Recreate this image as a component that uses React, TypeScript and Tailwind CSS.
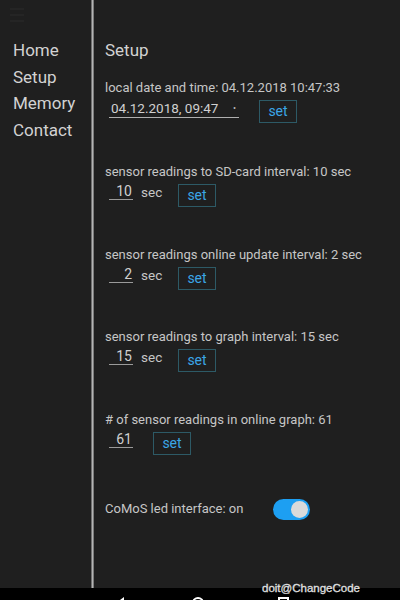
import React from "react";

const font = { fontFamily: "Roboto, 'Noto Sans', sans-serif" };

function SetButton() {
  return (
    <div className="h-[23px] w-[38px] border border-[#2d5a66] flex items-center justify-center text-[14px] leading-none text-[#3ba6e6] pb-[1px]">
      set
    </div>
  );
}

function NumInput({ value }: { value: string }) {
  return (
    <div className="ml-[4px] mt-[-1px] w-[24px] h-[17px] leading-[17px] border-b border-[#9a9a9a] text-right text-[14px] text-[#cfcfcf] pr-[1px]">
      {value}
    </div>
  );
}

function Section({ label, value, mt, sec = true }: { label: string; value: string; mt: string; sec?: boolean }) {
  return (
    <div className={mt}>
      <div className="h-[20px] leading-[20px] text-[13px] text-[#c6c6c6] whitespace-nowrap">{label}</div>
      <div className="mt-[2px] flex items-start">
        <NumInput value={value} />
        {sec ? (
          <span className="ml-[8px] w-[37px] h-[17px] leading-[16px] text-[13.5px] text-[#c6c6c6]">sec</span>
        ) : (
          <span className="w-[20px]" />
        )}
        <SetButton />
      </div>
    </div>
  );
}

export default function App() {
  return (
    <div className="w-[400px] h-[600px] bg-[#1f1f1f] relative overflow-hidden flex flex-col" style={font}>
      <div className="flex flex-1 min-h-0">
        {/* left nav */}
        <div className="w-[91px] relative">
          <div className="absolute left-[10px] top-[8px] flex flex-col gap-[4px]">
            <div className="w-[14px] h-[2px] bg-[#252525]" />
            <div className="w-[14px] h-[2px] bg-[#252525]" />
            <div className="w-[14px] h-[2px] bg-[#252525]" />
          </div>
          <div className="pt-[37px] pl-[13px] text-[17px] leading-[26.5px] text-[#d2d2d2]">
            <div>Home</div>
            <div>Setup</div>
            <div>Memory</div>
            <div>Contact</div>
          </div>
        </div>
        {/* divider */}
        <div className="w-[3px] flex">
          <div className="w-[1px] bg-[#6e6e6e]" />
          <div className="w-[1px] bg-[#b4b4b4]" />
          <div className="w-[1px] bg-[#7a7a7a]" />
        </div>
        {/* right content */}
        <div className="flex-1 pl-[11px] pt-[37px]">
          <div className="h-[26px] leading-[26px] text-[17px] text-[#d2d2d2]">Setup</div>
          <div className="mt-[15px] h-[20px] leading-[20px] text-[13px] text-[#c6c6c6] whitespace-nowrap">
            local date and time: 04.12.2018 10:47:33
          </div>
          <div className="mt-[2px] flex items-start">
            <div className="ml-[4px] mt-[-1px] w-[130px] h-[19px] leading-[18px] border-b border-[#b0b0b0] flex items-center text-[13.5px] text-[#d0d0d0] pl-[2px]">
              <span>04.12.2018, 09:47</span>
              <span className="ml-auto mr-[3px] text-[9px] text-[#bbbbbb]">•</span>
            </div>
            <div className="ml-[20px]">
              <SetButton />
            </div>
          </div>

          <Section label="sensor readings to SD-card interval: 10 sec" value="10" mt="mt-[39px]" />
          <Section label="sensor readings online update interval: 2 sec" value="2" mt="mt-[38px]" />
          <Section label="sensor readings to graph interval: 15 sec" value="15" mt="mt-[37px]" />
          <Section label="# of sensor readings in online graph: 61" value="61" mt="mt-[38px]" sec={false} />

          <div className="mt-[43px] flex items-center h-[22px]">
            <span className="w-[168px] text-[13px] text-[#c6c6c6] whitespace-nowrap">CoMoS led interface: on</span>
            <div className="w-[37px] h-[21px] rounded-full bg-[#1d9ff2] flex items-center justify-end pr-[2px]">
              <div className="w-[17px] h-[17px] rounded-full bg-[#dadada]" />
            </div>
          </div>
        </div>
      </div>
      {/* bottom system bar */}
      <div className="h-[12px] bg-black relative overflow-hidden">
        <div className="absolute left-[116px] top-[9px] w-0 h-0 border-r-[8px] border-r-white border-t-[6px] border-t-transparent border-b-[6px] border-b-transparent" />
        <div className="absolute left-[192px] top-[9px] w-[12px] h-[12px] rounded-full border-2 border-white" />
        <div className="absolute left-[278px] top-[9px] w-[11px] h-[11px] border-2 border-white" />
      </div>
      <div
        className="absolute left-[262px] top-[581px] text-[11.5px] leading-[14px] text-[#e0e0e0]"
        style={{ fontFamily: "'Liberation Sans', Arial, sans-serif", WebkitTextStroke: "0.3px #e0e0e0" }}
      >
        doit@ChangeCode
      </div>
    </div>
  );
}
